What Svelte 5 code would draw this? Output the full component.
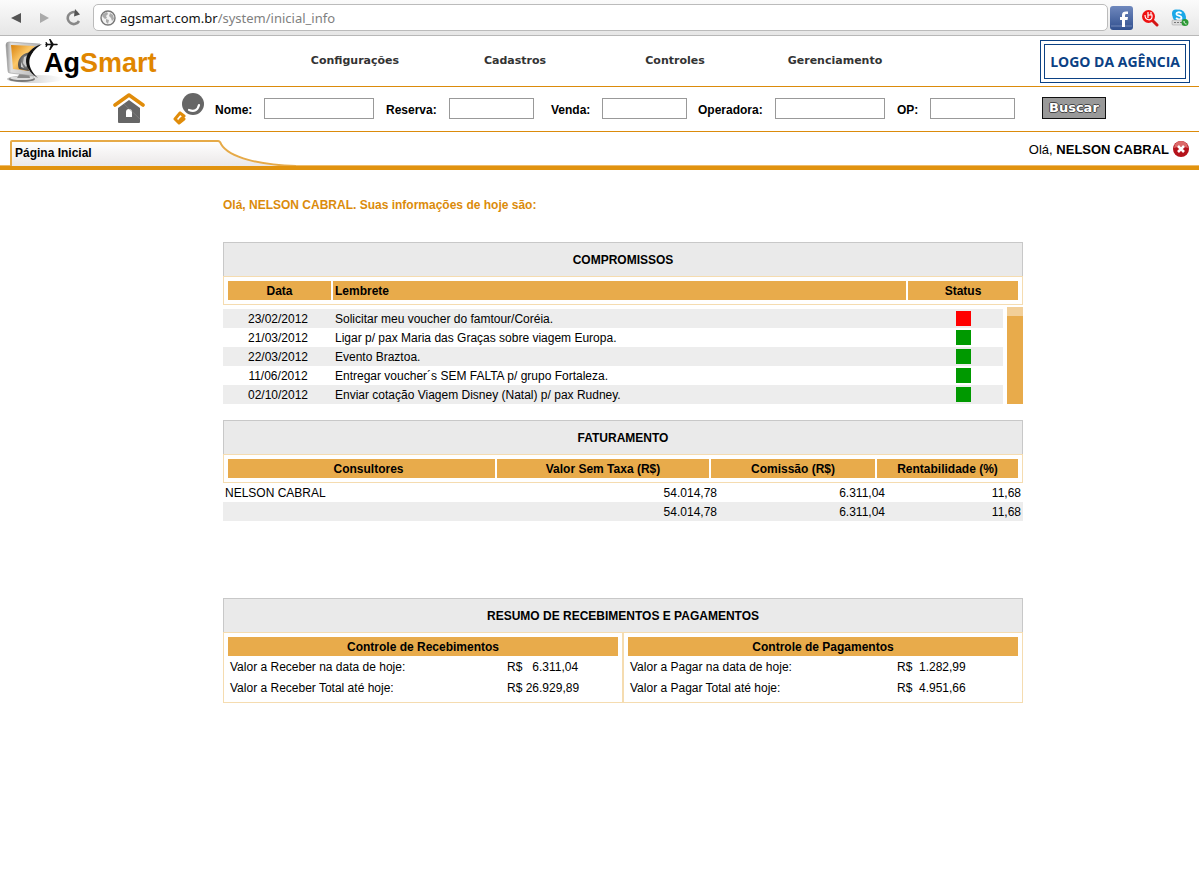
<script>
	const menu = ['Configurações', 'Cadastros', 'Controles', 'Gerenciamento'];

	const fields = [
		{ id: 'nome', label: 'Nome:', size: 'wide' },
		{ id: 'reserva', label: 'Reserva:', size: 'narrow' },
		{ id: 'venda', label: 'Venda:', size: 'narrow' },
		{ id: 'operadora', label: 'Operadora:', size: 'wide' },
		{ id: 'op', label: 'OP:', size: 'narrow' }
	];

	const compromissos = [
		{ data: '23/02/2012', texto: 'Solicitar meu voucher do famtour/Coréia.', status: 'atrasado' },
		{ data: '21/03/2012', texto: 'Ligar p/ pax Maria das Graças sobre viagem Europa.', status: 'em dia' },
		{ data: '22/03/2012', texto: 'Evento Braztoa.', status: 'em dia' },
		{ data: '11/06/2012', texto: 'Entregar voucher´s SEM FALTA p/ grupo Fortaleza.', status: 'em dia' },
		{ data: '02/10/2012', texto: 'Enviar cotação Viagem Disney (Natal) p/ pax Rudney.', status: 'em dia' }
	];

	const faturamento = [
		['NELSON CABRAL', '54.014,78', '6.311,04', '11,68'],
		['', '54.014,78', '6.311,04', '11,68']
	];

	const resumo = [
		{
			titulo: 'Controle de Recebimentos',
			linhas: [
				['Valor a Receber na data de hoje:', 'R$   6.311,04'],
				['Valor a Receber Total até hoje:', 'R$ 26.929,89']
			]
		},
		{
			titulo: 'Controle de Pagamentos',
			linhas: [
				['Valor a Pagar na data de hoje:', 'R$  1.282,99'],
				['Valor a Pagar Total até hoje:', 'R$  4.951,66']
			]
		}
	];

	let url = $state('agsmart.com.br/system/inicial_info');
	let host = $derived(url.split('/')[0]);
	let path = $derived(url.slice(host.length));
</script>

<div class="browser">
	<button class="nav" aria-label="Voltar">
		<svg width="12" height="12" viewBox="0 0 12 12"><path d="M11 1v10L1 6z" fill="#555" /></svg>
	</button>
	<button class="nav" aria-label="Avançar">
		<svg width="12" height="12" viewBox="0 0 12 12"><path d="M2 1v10l9-5z" fill="#aaa" /></svg>
	</button>
	<button class="nav" aria-label="Recarregar">
		<svg width="16" height="18" viewBox="0 0 16 18">
			<path d="M13 12a6 6 0 1 1-2-8" fill="none" stroke="#888" stroke-width="2.600" />
			<path d="M9 0l5 5.500-6 2z" fill="#555" />
		</svg>
	</button>
	<div class="address">
		<svg width="16" height="16" viewBox="0 0 16 16">
			<circle cx="8" cy="8" r="7" fill="#f2f2f2" stroke="#777" stroke-width="1.400" />
			<path d="M3 4l4-2 1 2-2 2 1 2-2 1-3-3zM6 9l3 1-1 4-2-2zM10 3l3 2 1 4-2 2-1-3-2-2z" fill="#aaa" />
		</svg>
		<span class="url"><span class="host">{host}</span>{path}</span>
	</div>
	<div class="extensions">
		<button aria-label="Facebook">
			<svg width="23" height="24" viewBox="0 0 23 24">
				<defs>
					<linearGradient id="fb" x1="0" y1="0" x2="0" y2="1">
						<stop offset="0" stop-color="#6f88bd" />
						<stop offset="1" stop-color="#31508f" />
					</linearGradient>
				</defs>
				<rect width="23" height="24" rx="3" fill="url(#fb)" />
				<path d="M1 20h21" stroke="#7388b8" />
				<path d="M12 21v-7h-2v-3h2V9c0-3 2-4 6-3.500V8c-2-.2-3 0-3 1.500V11h3l-.5 3H15v7z" fill="#fff" />
			</svg>
		</button>
		<button aria-label="Busca">
			<svg width="18" height="18" viewBox="0 0 18 18">
				<path d="M11 11l5 5" stroke="#d21616" stroke-width="3" stroke-linecap="round" />
				<circle cx="7.500" cy="7.500" r="6.500" fill="#e11" />
				<path d="M4 6c0 6 7 6 7 2V6H7M7 3v6M10 3v3" fill="none" stroke="#fff" stroke-width="1.200" />
			</svg>
		</button>
		<button aria-label="Skype">
			<svg width="18" height="18" viewBox="0 0 18 18">
				<circle cx="5" cy="4.500" r="4" fill="#1aa8e8" />
				<circle cx="8" cy="7" r="6.500" fill="#1aa8e8" />
				<circle cx="11" cy="9" r="4" fill="#1aa8e8" />
				<path d="M10.500 4.500C9 2.500 5 3 5.500 5.200c.5 1.800 5 1.300 5 3.500 0 2.300-4 2.300-5.300 0" fill="none" stroke="#fff" stroke-width="1.800" />
				<rect x="1" y="11" width="12" height="5" rx="1" fill="#ddd" stroke="#999" stroke-width=".5" />
				<path d="M3 13.500h8" stroke="#777" stroke-dasharray="2 1" />
				<circle cx="14" cy="13.500" r="3.500" fill="#2c9a35" />
				<path d="M13 12c0 2 1 3 2.500 3" fill="none" stroke="#fff" />
			</svg>
		</button>
	</div>
</div>

<header>
	<a class="brand" href="#inicio" aria-label="AgSmart">
		<svg width="60" height="46" viewBox="0 0 60 46">
			<defs>
				<linearGradient id="tela" x1="0" y1="0" x2="1" y2="1">
					<stop offset="0" stop-color="#d9820c" />
					<stop offset=".45" stop-color="#fbc768" />
					<stop offset="1" stop-color="#c97a14" />
				</linearGradient>
				<linearGradient id="moldura" x1="0" y1="0" x2="1" y2="0">
					<stop offset="0" stop-color="#8a8a8a" />
					<stop offset=".15" stop-color="#e0e0e0" />
					<stop offset="1" stop-color="#b5b5b5" />
				</linearGradient>
				<radialGradient id="globo">
					<stop offset="0" stop-color="#aaa" />
					<stop offset="1" stop-color="#4a4a4a" />
				</radialGradient>
				<linearGradient id="sombra" x1="0" y1="0" x2="1" y2="0">
					<stop offset="0" stop-color="#bbb" />
					<stop offset="1" stop-color="#fff" />
				</linearGradient>
			</defs>
			<ellipse cx="30" cy="41" rx="28" ry="4" fill="url(#sombra)" />
			<ellipse cx="17" cy="41" rx="13" ry="3" fill="#777" />
			<ellipse cx="17" cy="40" rx="12" ry="2" fill="#ddd" />
			<path d="M15 35l9 1 1 4H12z" fill="#8a8a8a" />
			<path d="M1 7q0-3 3-3l31 2c-9 6-13 13-13 19 0 6 3 10 7 13L5 35q-2 0-2-2z" fill="url(#moldura)" stroke="#999" stroke-width=".6" />
			<path d="M6 7l24 1c-8 7-10 16-6 25L8 31z" fill="url(#tela)" />
			<path d="M28 14c-12 0-17 9-14 17l10 2c-3-7-2-13 4-19z" fill="url(#globo)" />
			<path d="M19 19l4-2-1 5 1 4-2 3-3-4zM16 24l3 6-3-1z" fill="#ccc" />
			<path d="M37 6C17 12 16 30 33 40 20 28 22 16 37 6z" fill="#111" />
			<path d="M41 6.500h11" stroke="#111" stroke-width="1.500" stroke-linecap="round" />
			<path d="M44 1h1.500l3.500 5.500-3.500 5.500H44l2-5.500zM40.500 4h1l1.500 2.500L41.500 9h-1l.5-2.500z" fill="#111" />
		</svg>
		<span class="name"><span class="ag">Ag</span>Smart</span>
	</a>
	<nav>
		{#each menu as item}
			<a href="#menu">{item}</a>
		{/each}
	</nav>
	<div class="agency"><div>LOGO DA AGÊNCIA</div></div>
</header>

<form class="search" onsubmit={(e) => e.preventDefault()}>
	<a class="home" href="#inicio" aria-label="Página inicial">
		<svg width="32" height="32" viewBox="0 0 32 32">
			<path d="M2 12L16 2l14 10" fill="none" stroke="#e08c0a" stroke-width="3.600" stroke-linecap="round" stroke-linejoin="round" />
			<path d="M16 7l11 8v14q0 1-1 1H6q-1 0-1-1V15z" fill="#666" />
			<path d="M13 24v-5q0-3 3-3t3 3v5z" fill="#fff" />
			<path d="M11 11l16 15" stroke="#888" stroke-width=".6" />
		</svg>
	</a>
	<svg class="lens" width="32" height="32" viewBox="0 0 32 32">
		<circle cx="20" cy="11" r="11" fill="#666" />
		<path d="M16 17q8 3 10-5" fill="none" stroke="#fff" stroke-width="2.200" stroke-linecap="round" />
		<path d="M7 20l-5 6 4 4 5-4M7 20l4 3-4 4" fill="none" stroke="#e08c0a" stroke-width="3" stroke-linecap="round" stroke-linejoin="round" />
	</svg>
	<div class="fields">
		{#each fields as field}
			<div class="field">
				<label for={field.id}>{field.label}</label>
				<input id={field.id} class={field.size} type="text" />
			</div>
		{/each}
	</div>
	<button class="buscar">Buscar</button>
</form>

<div class="tabs">
	<div class="tab">
		<svg width="300" height="26" viewBox="0 0 300 26">
			<defs>
				<linearGradient id="aba" x1="0" y1="0" x2="0" y2="1">
					<stop offset="0" stop-color="#fff" />
					<stop offset="1" stop-color="#ebe8e8" />
				</linearGradient>
			</defs>
			<path d="M1 26V2q0-1 1-1h206q2 0 3 3c8 14 40 21 75 22" fill="url(#aba)" stroke="#e6aa48" stroke-width="2" />
		</svg>
		<span>Página Inicial</span>
	</div>
	<div class="user">
		<span>Olá, <b>NELSON CABRAL</b></span>
		<button aria-label="Sair">
			<svg width="16" height="16" viewBox="0 0 16 16">
				<circle cx="8" cy="8" r="8" fill="#b5121b" />
				<path d="M1 7a7 7 0 0 1 14 0q-7-3-14 0z" fill="#dc6a6a" />
				<path d="M5 5l6 6M11 5l-6 6" stroke="#fff" stroke-width="2.600" />
			</svg>
		</button>
	</div>
</div>

<main>
	<p class="hello">Olá, NELSON CABRAL. Suas informações de hoje são:</p>

	<section class="compromissos">
		<h2>COMPROMISSOS</h2>
		<table class="head">
			<thead>
				<tr>
					<th class="data">Data</th>
					<th class="lembrete">Lembrete</th>
					<th class="status">Status</th>
				</tr>
			</thead>
		</table>
		<div class="list">
			<table class="rows">
				<tbody>
					{#each compromissos as c}
						<tr>
							<td class="data">{c.data}</td>
							<td class="lembrete">{c.texto}</td>
							<td class="status">
								<span class="flag" class:late={c.status === 'atrasado'} title={c.status}></span>
							</td>
						</tr>
					{/each}
				</tbody>
			</table>
			<div class="scroll"></div>
		</div>
	</section>

	<section class="faturamento">
		<h2>FATURAMENTO</h2>
		<table class="head">
			<thead>
				<tr>
					<th class="consultor">Consultores</th>
					<th class="valor">Valor Sem Taxa (R$)</th>
					<th class="comissao">Comissão (R$)</th>
					<th class="renda">Rentabilidade (%)</th>
				</tr>
			</thead>
		</table>
		<table class="rows">
			<tbody>
				{#each faturamento as [nome, valor, comissao, renda]}
					<tr>
						<td>{nome}</td>
						<td class="valor">{valor}</td>
						<td class="comissao">{comissao}</td>
						<td class="renda">{renda}</td>
					</tr>
				{/each}
			</tbody>
		</table>
	</section>

	<section>
		<h2>RESUMO DE RECEBIMENTOS E PAGAMENTOS</h2>
		<div class="resumo">
			{#each resumo as bloco}
				<table>
					<thead>
						<tr><th colspan="2">{bloco.titulo}</th></tr>
					</thead>
					<tbody>
						{#each bloco.linhas as [rotulo, valor]}
							<tr>
								<td>{rotulo}</td>
								<td class="money">{valor}</td>
							</tr>
						{/each}
					</tbody>
				</table>
			{/each}
		</div>
	</section>
</main>

<style>
	:global(body) {
		background: #fff;
		color: #000;
		font: 12px/19px 'Liberation Sans', Arial, sans-serif;
	}

	button {
		padding: 0;
		border: none;
		background: none;
		cursor: pointer;
	}

	svg {
		display: block;
	}

	a {
		color: inherit;
		text-decoration: none;
	}

	/* Browser bar */
	.browser {
		display: flex;
		align-items: center;
		gap: 16px;
		height: 35px;
		padding: 0 10px;
		background: linear-gradient(#fbfbfb, #e6e6e6);
		border-bottom: 1px solid #b8b8b8;
	}

	.address {
		display: flex;
		flex: 1;
		align-items: center;
		gap: 4px;
		height: 25px;
		margin-left: -5px;
		padding-left: 6px;
		background: #fff;
		border: 1px solid #bbb;
		border-radius: 5px;
	}

	.url {
		color: #808080;
		font: 13px/20px 'Noto Sans', Tahoma, sans-serif;
	}

	.host {
		color: #111;
	}

	.extensions {
		display: flex;
		align-items: center;
		gap: 8px;
		margin-left: -14px;
	}

	.extensions button:last-child {
		margin-left: 4px;
	}

	/* Header */
	header {
		display: flex;
		align-items: center;
		height: 50px;
		padding: 0 9px 0 5px;
		border-bottom: 1px solid #db8b0b;
	}

	.brand {
		display: flex;
		align-items: center;
		width: 270px;
	}

	.name {
		margin-left: -21px;
		padding-top: 4px;
		color: #e08600;
		font-size: 27px;
		font-weight: bold;
		line-height: 30px;
	}

	.ag {
		color: #000;
	}

	nav {
		display: flex;
		flex: 1;
	}

	nav a {
		width: 160px;
		color: #333;
		font: bold 11px/16px 'DejaVu Sans', Verdana, sans-serif;
		text-align: center;
	}

	.agency {
		padding: 3px;
		border: 1px solid #0b4184;
	}

	.agency div {
		padding: 0 5px;
		border: 1px solid #0b4184;
		color: #0b4184;
		font: bold 14px/33px 'Open Sans', 'Segoe UI', sans-serif;
	}

	/* Search bar */
	.search {
		display: flex;
		align-items: center;
		height: 44px;
		padding-left: 113px;
		border-bottom: 1px solid #db8b0b;
	}

	.lens {
		margin: 0 10px 0 28px;
	}

	.fields {
		display: grid;
		grid-template-columns: 171px 165px 147px 199px 145px;
		padding-bottom: 1px;
	}

	.field {
		display: flex;
		align-items: center;
		gap: 12px;
	}

	label {
		padding-top: 4px;
		font-weight: bold;
	}

	input {
		box-sizing: border-box;
		height: 21px;
		padding: 0 3px;
		border: 1px solid #999;
		background: #fff;
		font: inherit;
	}

	.wide {
		width: 110px;
	}

	.narrow {
		width: 85px;
	}

	.buscar {
		height: 22px;
		margin-bottom: 2px;
		padding: 0 6px;
		border: 1px solid #111;
		background: #999;
		color: #fff;
		font: bold 13px/20px 'DejaVu Sans', Verdana, sans-serif;
		text-shadow: 1px 0 #444, -1px 0 #444, 0 1px #444, 0 -1px #444;
	}

	/* Tab strip */
	.tabs {
		display: flex;
		align-items: flex-end;
		justify-content: space-between;
		height: 34px;
		padding: 0 10px;
		border-bottom: 4px solid #e1930f;
		box-shadow: inset 0 -1px #eebb6a;
	}

	.tab {
		position: relative;
		width: 300px;
		height: 26px;
	}

	.tab svg {
		position: absolute;
	}

	.tab span {
		position: relative;
		padding-left: 5px;
		font-weight: bold;
		line-height: 26px;
	}

	.user {
		display: flex;
		align-items: center;
		gap: 4px;
		height: 34px;
		font-size: 13px;
	}

	/* Content */
	main {
		width: 800px;
		margin: 0 auto;
		padding-left: 47px;
	}

	.hello {
		margin: 26px 0 27px;
		color: #db8b0b;
		font-weight: bold;
	}

	section {
		margin-bottom: 16px;
	}

	.faturamento {
		margin-bottom: 77px;
	}

	h2 {
		margin: 0;
		padding-top: 1px;
		border: 1px solid #c8c8c8;
		border-bottom: none;
		background: #eaeaea;
		font-size: 12px;
		line-height: 32px;
		text-align: center;
	}

	table {
		table-layout: fixed;
		width: 100%;
		border-spacing: 0;
	}

	th,
	td {
		box-sizing: border-box;
		height: 19px;
		padding: 1px 2px 0;
		line-height: 18px;
		text-align: left;
	}

	th {
		background: #e8ab4b;
		text-align: center;
	}

	.head {
		padding: 4px 2px;
		border: 1px solid #f5dcb0;
		border-spacing: 2px 0;
	}

	.list {
		display: flex;
		justify-content: space-between;
		gap: 4px;
		padding-top: 2px;
	}

	.list .rows {
		margin-top: 2px;
	}

	.compromissos .rows tr:nth-child(odd),
	.faturamento .rows tr:nth-child(even) {
		background: #ededed;
	}

	th.data {
		width: 103px;
	}

	td.data {
		width: 110px;
		text-align: center;
	}

	th.lembrete {
		text-align: left;
	}

	th.status {
		width: 110px;
	}

	td.status {
		width: 49px;
		padding-top: 0;
	}

	.flag {
		display: block;
		width: 15px;
		height: 15px;
		background: #090;
	}

	.flag.late {
		background: #f00;
	}

	.scroll {
		width: 16px;
		flex-shrink: 0;
		background: linear-gradient(#f2cf98 9px, #e8ab4b 9px);
	}

	th.consultor {
		padding-left: 16px;
	}

	th.valor {
		width: 212px;
	}

	th.comissao {
		width: 164px;
	}

	th.renda {
		width: 141px;
	}

	td.valor,
	td.comissao,
	td.renda {
		text-align: right;
	}

	td.valor {
		width: 224px;
	}

	td.comissao {
		width: 168px;
	}

	td.renda {
		width: 136px;
	}

	.resumo {
		display: flex;
	}

	.resumo table {
		box-sizing: border-box;
		flex: 1;
		padding: 4px;
		border: 1px solid #f5dcb0;
	}

	.resumo td {
		height: 21px;
		padding-top: 2px;
		line-height: 19px;
	}

	.resumo .money {
		padding-left: 84px;
		white-space: pre;
	}

	.resumo table:last-child .money {
		padding-left: 74px;
	}
</style>
